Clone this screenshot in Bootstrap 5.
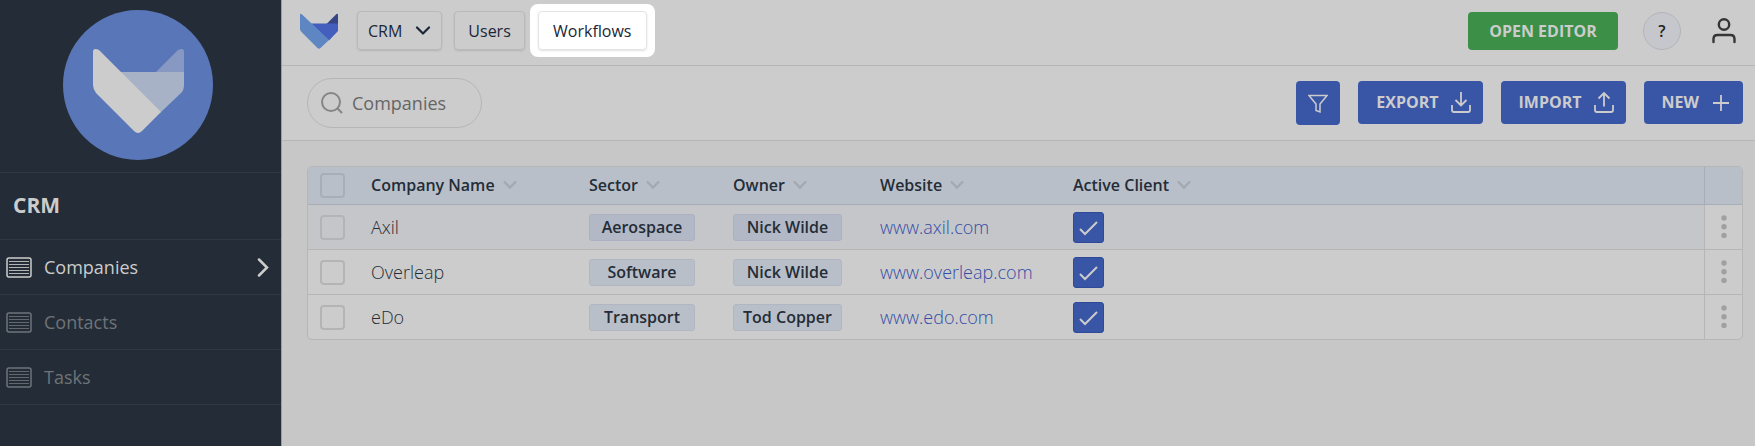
<!DOCTYPE html>
<html lang="en">
<head>
<meta charset="utf-8">
<meta name="viewport" content="width=device-width, initial-scale=1">
<title>CRM – Companies</title>
<link href="https://cdn.jsdelivr.net/npm/bootstrap@5.3.0/dist/css/bootstrap.min.css" rel="stylesheet">
<style>
  :root { --line: #b6b6b6; --navy: #1b2738; --ink: #242d37; --blue: #3955a6; --paper: #ccc; }
  body { font-family: "Open Sans", sans-serif; font-size: 16px; color: var(--ink); background: #c7c7c7; }
  svg { display: block; flex: none; }

  /* sidebar */
  .side { width: 282px; background: var(--ink); border-right: 1px solid #9c9fa2; }
  .side-logo { padding: 10px 6px 12px 0; }
  .side-title { height: 67px; padding-left: 13px; font-size: 21px; font-weight: 700; color: var(--paper); }
  .side-rule { border-top: 1px solid #2f3945; }
  .side-link { height: 55px; padding: 0 12px 0 6px; gap: 12px; font-size: 18px; font-weight: 500; color: #6e7379; text-decoration: none; }
  .side-link.active { color: var(--paper); }

  /* top bars */
  .topbar { height: 66px; padding: 0 18px 4px; background: var(--paper); border-bottom: 1px solid var(--line); }
  .toolbar { height: 75px; padding: 0 12px 0 25px; background: var(--paper); border-bottom: 1px solid var(--line); }
  .app-bar { gap: 12px; margin-left: 19px; }
  .app-btn { height: 39px; padding: 0 13px; font-size: 16px; font-weight: 500; color: var(--navy); background: transparent; border: 1px solid #b9b9b9; border-radius: 4px; box-shadow: 0 1px 2px rgba(0,0,0,.12); }
  .app-menu { padding: 0 10px; gap: 13px; }
  .spotlight { padding: 7px 8px; background: #fff; border-radius: 8px; margin-left: -7px; }
  .spotlight .app-btn { min-width: 109px; border-color: #e4e4e4; }
  .editor-btn { height: 38px; width: 150px; font-weight: 700; color: var(--paper); background: #3b8f47; border: 0; border-radius: 4px; }
  .help-btn { width: 38px; height: 38px; margin: 0 30px 0 25px; font-weight: 600; color: #222; background: #c5c7cc; border: 1px solid #b3b5bb; border-radius: 50%; }
  .search-box { width: 175px; height: 50px; padding: 0 13px; gap: 9px; border: 1px solid var(--line); border-radius: 25px; }
  .search-box input { width: 110px; padding: 0; font-size: 18px; color: #666; background: none; border: 0; outline: 0; }
  .search-box input::placeholder { color: #666; opacity: 1; }
  .actions { gap: 18px; padding-bottom: 1px; }
  .act-btn { height: 43px; padding: 0 12px 2px 18px; gap: 12px; font-weight: 700; color: var(--paper); background: var(--blue); border: 0; border-radius: 4px; }
  .act-btn svg { margin-top: 2px; }
  .filter-btn { width: 44px; height: 44px; padding: 0 12px; }

  /* records */
  .grid-wrap { margin: 25px 12px 0 25px; border: 1px solid var(--line); border-radius: 5px; overflow: hidden; background: var(--paper); }
  .grid { width: 100%; table-layout: fixed; border-collapse: separate; border-spacing: 0; }
  .grid th, .grid td { padding: 0; vertical-align: middle; }
  .grid th { height: 38px; font-weight: 600; background: #b9bfc9; border-bottom: 1px solid #a6adb6; }
  .grid th span { padding-bottom: 1px; }
  .grid td { height: 45px; font-size: 18px; font-weight: 300; border-bottom: 1px solid var(--line); }
  .grid tbody tr:last-child td { height: 44px; border-bottom: 0; }
  .grid tbody tr:first-child td:not(:last-child) { background: #c5c6ca; }
  .grid th:first-child, .grid td:first-child { padding-left: 12px; }
  .grid td:last-child { border-left: 1px solid var(--line); }
  .grid th:last-child { border-left: 1px solid #a6adb6; }
  .grid a { color: #344da6; text-decoration: none; }
  .sort { color: #a4a8af; }
  .pick { display: block; width: 25px; height: 25px; margin: 0; appearance: none; border: 2px solid #b4b4b6; border-radius: 4px; }
  .grid th .pick { border-color: #a9adb6; }
  .flag { display: block; width: 31px; height: 31px; margin: 0; appearance: none; border: 1px solid #2f4a98; border-radius: 3px; background: var(--blue) url("data:image/svg+xml,%3Csvg xmlns='http://www.w3.org/2000/svg' viewBox='0 0 29 29' fill='none' stroke='%23ccc' stroke-width='2'%3E%3Cpath d='M6 16l5 5L23 9'/%3E%3C/svg%3E") center / 29px 29px no-repeat; }
  .tag { display: block; width: 106px; height: 27px; line-height: 24px; font-size: 16px; font-weight: 600; text-align: center; background: #b9bfc9; border: 1px solid #b0b6c2; border-radius: 3px; }
  .tag-owner { width: 109px; }
  .grid tbody tr:first-child .tag { background: #b3b8c6; border-color: #abb1c0; }
  .more { padding: 0; border: 0; background: none; }
</style>
</head>
<body>
<svg class="d-none" aria-hidden="true">
  <symbol id="i-list" viewBox="0 0 26 21"><rect x="1" y="1" width="24" height="19" rx="2" fill="none" stroke="currentColor" stroke-width="1.500"/><path d="M3 4.500h20M3 7.500h20M3 10.500h20M3 13.500h20M3 16.500h20" stroke="currentColor" fill="none" stroke-opacity=".85"/></symbol>
  <symbol id="i-sort" viewBox="0 0 14 10"><path d="M1 1.500l6 6 6-6" fill="none" stroke="currentColor" stroke-width="2.300"/></symbol>
  <symbol id="i-dots" viewBox="0 0 6 24"><g fill="#a0a0a0"><circle cx="3" cy="3" r="2.700"/><circle cx="3" cy="11.700" r="2.700"/><circle cx="3" cy="20.400" r="2.700"/></g></symbol>
</svg>

<div class="d-flex min-vh-100">
  <aside class="side flex-shrink-0">
    <div class="side-logo d-flex justify-content-center">
      <svg width="150" height="150" viewBox="0 0 150 150" role="img" aria-label="Company logo">
        <circle cx="75" cy="75" r="75" fill="#5876b8"/>
        <path d="M93 62l22-22q6-3 6 2v20z" fill="#8799c3"/>
        <path d="M57 62h64v13q0 5-3 8L97 103z" fill="#a7b2c7"/>
        <path d="M30 42q0-5 6-2L98 102 79 121q-4 4-8 0L33 83q-3-4-3-8z" fill="#ccc"/>
      </svg>
    </div>
    <div class="side-title side-rule d-flex align-items-center">CRM</div>
    <nav>
      <a class="side-link side-rule active d-flex align-items-center" href="#">
        <svg width="26" height="21"><use href="#i-list"/></svg>Companies
        <svg class="ms-auto" width="12" height="19" viewBox="0 0 12 19"><path d="M2 1.500l8 8-8 8" fill="none" stroke="currentColor" stroke-width="2.500" stroke-linecap="round"/></svg>
      </a>
      <a class="side-link side-rule d-flex align-items-center" href="#"><svg width="26" height="21"><use href="#i-list"/></svg>Contacts</a>
      <a class="side-link side-rule d-flex align-items-center" href="#"><svg width="26" height="21"><use href="#i-list"/></svg>Tasks</a>
    </nav>
    <div class="side-rule"></div>
  </aside>

  <div class="flex-grow-1">
    <header class="topbar d-flex align-items-center">
      <svg width="38" height="36" viewBox="0 0 38 36" role="img" aria-label="Home">
        <path d="M26.500 11L36.500 1q1.500-1 1.500 1v9z" fill="#374585"/>
        <path d="M11 10.500h27V18l-9 9.500z" fill="#435ebd"/>
        <path d="M0 2q0-2 1.500-1L29 27l-8.500 8q-1.500 1.500-3 0L1.500 19Q0 17.500 0 16z" fill="#5d86c3"/>
      </svg>
      <div class="app-bar d-flex align-items-center">
        <button class="app-btn app-menu d-flex align-items-center" type="button">CRM
          <svg width="16" height="10" viewBox="0 0 16 10"><path d="M2 1.500l6 6 6-6" fill="none" stroke="currentColor" stroke-width="2.200" stroke-linecap="round" stroke-linejoin="round"/></svg>
        </button>
        <button class="app-btn" type="button">Users</button>
        <div class="spotlight"><button class="app-btn d-block" type="button">Workflows</button></div>
      </div>
      <button class="editor-btn ms-auto" type="button">OPEN EDITOR</button>
      <button class="help-btn" type="button">?</button>
      <a href="#" aria-label="Account">
        <svg width="26" height="28" viewBox="0 0 26 28"><g fill="none" stroke="#353535" stroke-width="2.400" stroke-linecap="round"><circle cx="13" cy="7.500" r="5.200"/><path d="M2.500 25v-3q0-4 4-4h13q4 0 4 4v3"/></g></svg>
      </a>
    </header>

    <div class="toolbar d-flex align-items-center">
      <label class="search-box d-flex align-items-center">
        <svg width="22" height="22" viewBox="0 0 22 22"><g fill="none" stroke="#858585" stroke-width="2"><circle cx="10" cy="10" r="9"/><path d="M16 16l5 5"/></g></svg>
        <input type="search" placeholder="Companies" aria-label="Search companies">
      </label>
      <div class="actions d-flex align-items-center ms-auto">
        <button class="act-btn filter-btn" type="button" aria-label="Filter">
          <svg width="20" height="20" viewBox="0 0 20 20"><path d="M1 1.500h18L12 10v8l-4-1.500V10z" fill="none" stroke="currentColor" stroke-width="1.500"/></svg>
        </button>
        <button class="act-btn d-flex align-items-center" type="button">EXPORT
          <svg width="20" height="21" viewBox="0 0 20 21"><path d="M10 0v13M4.500 8l5.500 5.500L15.500 8M1 13v5q0 2 2 2h14q2 0 2-2v-5" fill="none" stroke="currentColor" stroke-width="1.800"/></svg>
        </button>
        <button class="act-btn d-flex align-items-center" type="button">IMPORT
          <svg width="20" height="21" viewBox="0 0 20 21"><path d="M10 14.500V1M4.500 6.500L10 1l5.500 5.500M1 13v5q0 2 2 2h14q2 0 2-2v-5" fill="none" stroke="currentColor" stroke-width="1.800"/></svg>
        </button>
        <button class="act-btn d-flex align-items-center" type="button">NEW
          <svg width="20" height="20" viewBox="0 0 20 20"><path d="M10 2v16M2 10h16" fill="none" stroke="currentColor" stroke-width="1.800"/></svg>
        </button>
      </div>
    </div>

    <main class="grid-wrap">
      <table class="grid">
        <colgroup><col style="width:63px"><col style="width:218px"><col style="width:144px"><col style="width:147px"><col style="width:193px"><col><col style="width:38px"></colgroup>
        <thead>
          <tr>
            <th><input class="pick" type="checkbox" aria-label="Select all"></th>
            <th><span class="d-flex align-items-center gap-2">Company Name<svg class="sort" width="14" height="10"><use href="#i-sort"/></svg></span></th>
            <th><span class="d-flex align-items-center gap-2">Sector<svg class="sort" width="14" height="10"><use href="#i-sort"/></svg></span></th>
            <th><span class="d-flex align-items-center gap-2">Owner<svg class="sort" width="14" height="10"><use href="#i-sort"/></svg></span></th>
            <th><span class="d-flex align-items-center gap-2">Website<svg class="sort" width="14" height="10"><use href="#i-sort"/></svg></span></th>
            <th><span class="d-flex align-items-center gap-2">Active Client<svg class="sort" width="14" height="10"><use href="#i-sort"/></svg></span></th>
            <th></th>
          </tr>
        </thead>
        <tbody>
          <tr>
            <td><input class="pick" type="checkbox" aria-label="Select Axil"></td>
            <td>Axil</td><td><span class="tag">Aerospace</span></td><td><span class="tag tag-owner">Nick Wilde</span></td>
            <td><a href="#">www.axil.com</a></td>
            <td><input class="flag" type="checkbox" checked aria-label="Axil is an active client"></td>
            <td><button class="more d-block mx-auto" type="button" aria-label="Row menu"><svg width="6" height="24"><use href="#i-dots"/></svg></button></td>
          </tr>
          <tr>
            <td><input class="pick" type="checkbox" aria-label="Select Overleap"></td>
            <td>Overleap</td><td><span class="tag">Software</span></td><td><span class="tag tag-owner">Nick Wilde</span></td>
            <td><a href="#">www.overleap.com</a></td>
            <td><input class="flag" type="checkbox" checked aria-label="Overleap is an active client"></td>
            <td><button class="more d-block mx-auto" type="button" aria-label="Row menu"><svg width="6" height="24"><use href="#i-dots"/></svg></button></td>
          </tr>
          <tr>
            <td><input class="pick" type="checkbox" aria-label="Select eDo"></td>
            <td>eDo</td><td><span class="tag">Transport</span></td><td><span class="tag tag-owner">Tod Copper</span></td>
            <td><a href="#">www.edo.com</a></td>
            <td><input class="flag" type="checkbox" checked aria-label="eDo is an active client"></td>
            <td><button class="more d-block mx-auto" type="button" aria-label="Row menu"><svg width="6" height="24"><use href="#i-dots"/></svg></button></td>
          </tr>
        </tbody>
      </table>
    </main>
  </div>
</div>
<script src="https://cdn.jsdelivr.net/npm/bootstrap@5.3.0/dist/js/bootstrap.bundle.min.js"></script>
</body>
</html>
